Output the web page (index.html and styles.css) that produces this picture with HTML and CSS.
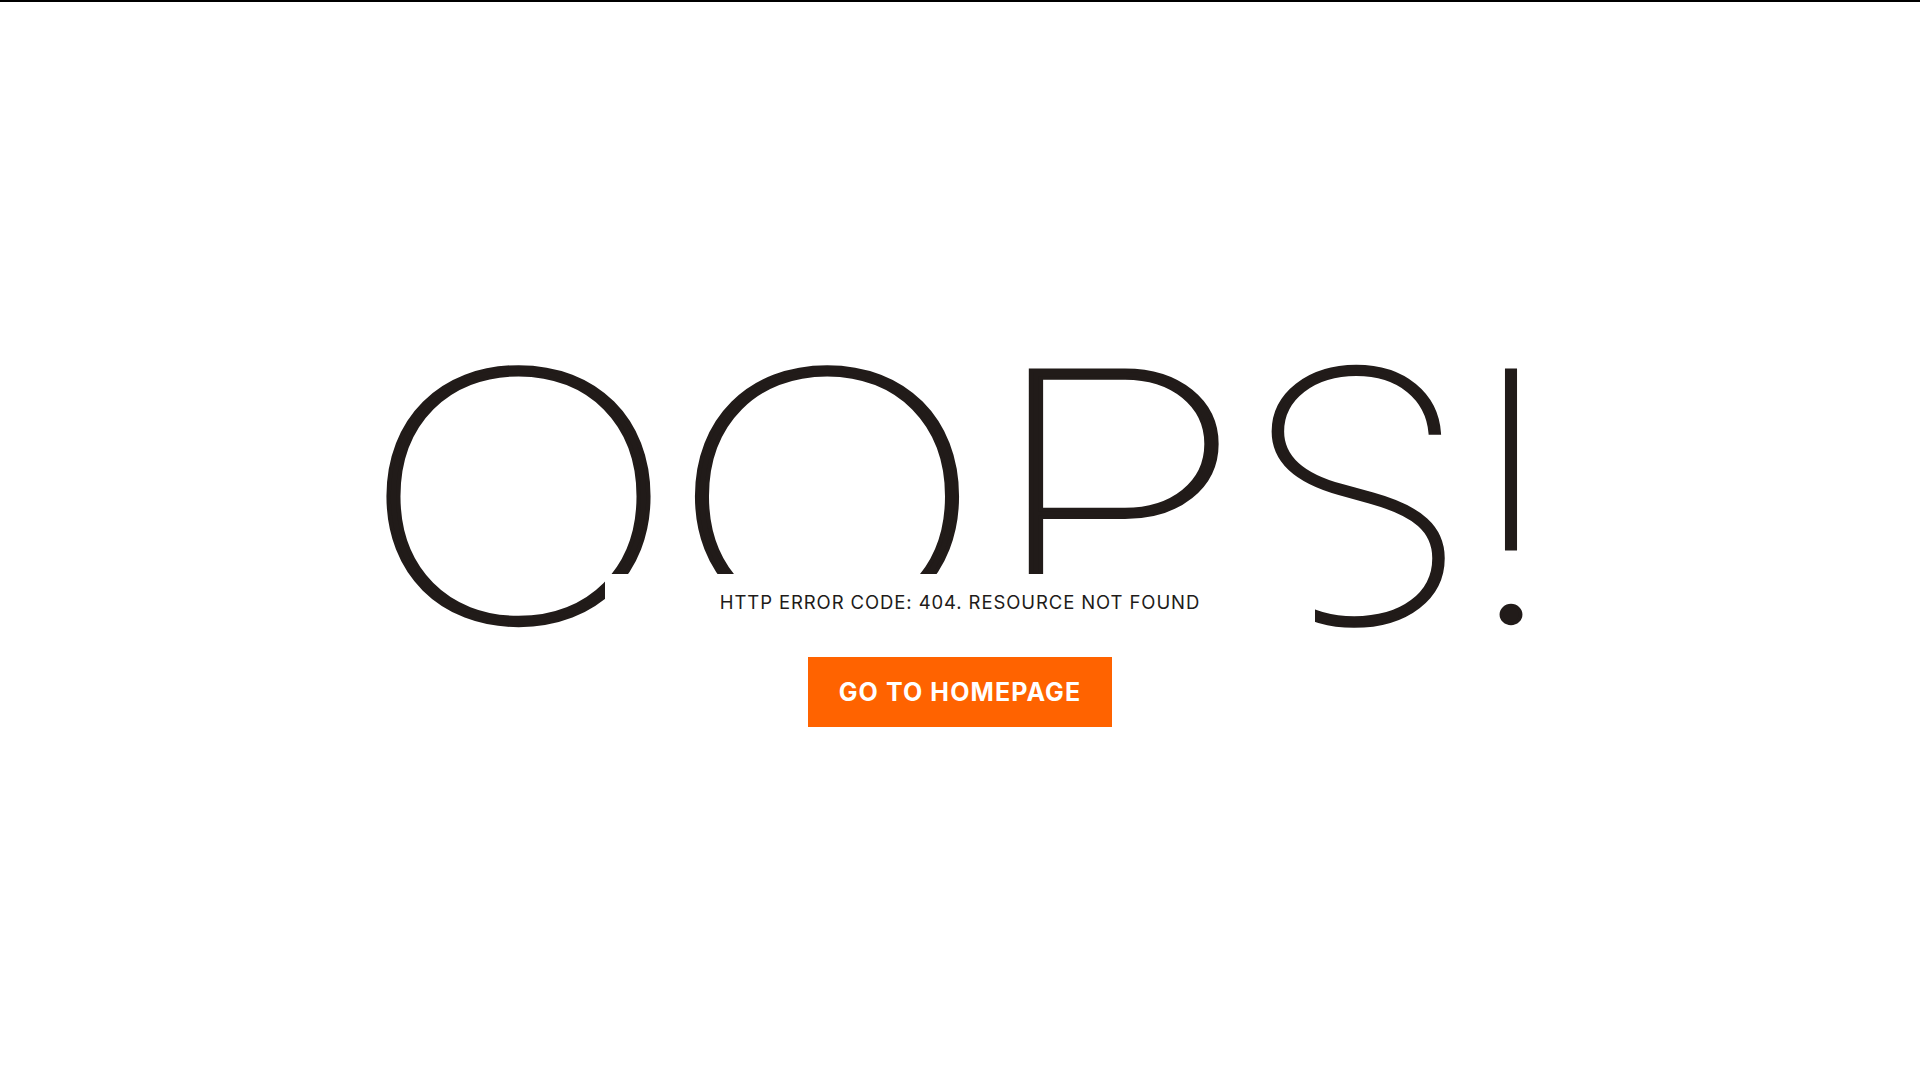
FILE: index.html
```
<!DOCTYPE html>
<html lang="en">
<head>
<meta charset="utf-8">
<title>404</title>
<link rel="stylesheet" href="styles.css">
</head>
<body>
<div class="topline"></div>
<main class="notfound">
  <div class="notfound-404">
    <h1 class="oops"><span class="l o1">O</span><span class="l o2">O</span><span class="l p">P</span><span class="l s">S</span><span class="l ex">!</span></h1>
    <h2 class="code">HTTP ERROR CODE: 404. RESOURCE NOT FOUND</h2>
  </div>
  <a class="btn" href="#">GO TO HOMEPAGE</a>
</main>
</body>
</html>
```
FILE: styles.css
```
html, body {
  margin: 0;
  padding: 0;
  background: #fff;
}
.topline {
  height: 2px;
  background: #000;
}
.notfound {
  display: flex;
  flex-direction: column;
  align-items: center;
  padding-top: 321px;
}
.notfound-404 {
  position: relative;
  width: 100%;
  height: 307px;
}
.oops {
  margin: 0;
  display: flex;
  justify-content: center;
  padding-right: 9px;
  font-family: Inter, sans-serif;
  font-weight: 135;
  font-size: 346px;
  line-height: 346px;
  color: #211b19;
  -webkit-text-stroke: 3.5px #211b19;
  white-space: nowrap;
}
.l {
  display: flex;
  justify-content: center;
  transform-origin: 50% 50%;
}
.o1 { width: 265px; transform: scaleX(1.246); }
.o2 { width: 266px; margin-left: 43px; transform: scaleX(1.246); }
.p  { width: 193px; margin-left: 68px; transform: translateX(-10px) scaleX(1.27); }
.s  {
  width: 174px;
  margin-left: 50px;
  transform: translateX(-3px) scaleX(1.108);
  clip-path: polygon(-80px -80px, 300px -80px, 300px 440px, 42px 440px, 42px 212px, -80px 212px);
}
.ex { width: 28px;  margin-left: 52px; transform: scaleX(1.07); }
.code {
  position: absolute;
  left: 50%;
  bottom: 0;
  transform: translateX(-50%);
  width: 710px;
  height: 56px;
  margin: 0;
  display: flex;
  align-items: center;
  justify-content: center;
  background: #fff;
  font-family: Inter, sans-serif;
  font-weight: 400;
  font-size: 18.5px;
  letter-spacing: 0.9px;
  color: #211b19;
  white-space: nowrap;
}
.btn {
  margin-top: 27px;
  width: 304px;
  height: 70px;
  display: flex;
  align-items: center;
  justify-content: center;
  background: #ff6300;
  color: #fff;
  text-decoration: none;
  font-family: Inter, sans-serif;
  font-weight: 700;
  font-size: 25px;
  letter-spacing: 1.1px;
}
```
